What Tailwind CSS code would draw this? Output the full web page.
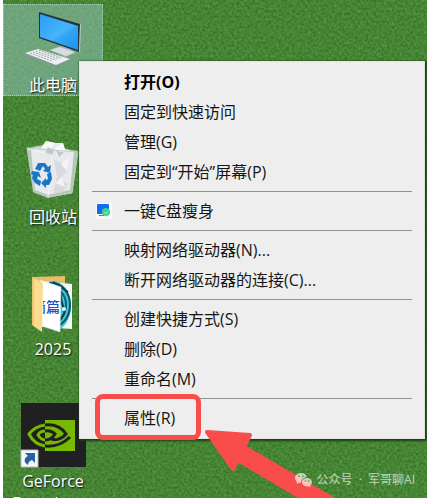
<!DOCTYPE html>
<html lang="zh-CN">
<head>
    <meta charset="UTF-8">
    <meta name="viewport" content="width=device-width, initial-scale=1.0">
    <title>桌面</title>
    <script src="https://cdn.jsdelivr.net/npm/@tailwindcss/browser@4"></script>
</head>
<body class="bg-white font-['Open_Sans','Noto_Sans_CJK_SC',sans-serif] text-base">
    <main class="relative h-screen overflow-hidden pl-[3px]">
        <!-- Grass wallpaper -->
        <svg class="absolute inset-y-0 right-0 left-[3px] h-full w-[calc(100%-3px)]" aria-hidden="true">
            <filter id="grass" x="0" y="0" width="100%" height="100%" color-interpolation-filters="sRGB">
                <feTurbulence type="fractalNoise" baseFrequency="0.38" numOctaves="2" seed="7"/>
                <feColorMatrix values="0.22 0 0.08 0 0.125  0.22 0.05 0 0 0.385  0.16 0 0.05 0 0.1  0 0 0 0 1"/>
            </filter>
            <rect width="100%" height="100%" fill="#458634" filter="url(#grass)"/>
        </svg>

        <!-- Desktop icons -->
        <div class="relative flex w-[100px] flex-col items-center gap-10 pt-1 leading-[22px] text-white text-center [text-shadow:1px_1px_2px_#000]">
            <div class="h-[92px] w-full bg-[#8fc0b8]/55 outline-1 -outline-offset-1 outline-dotted outline-[#a9d3b4]">
                <svg class="block h-[70px] w-full" viewBox="0 0 100 70">
                    <defs>
                        <linearGradient id="screen" x1="0" y1="0" x2="1" y2="1">
                            <stop offset="0" stop-color="#2a9df4"/>
                            <stop offset="0.5" stop-color="#45b4fb"/>
                            <stop offset="1" stop-color="#1f96f0"/>
                        </linearGradient>
                    </defs>
                    <path d="M47 46 56 43 61 39 69 42 68 46 72 49 63 53Z" fill="#aab3b8"/>
                    <path d="M47 46 56 43 72 48 63 52Z" fill="#d7dde0"/>
                    <path d="M36 8 77 20 76 48 36 34Z" fill="#26333c"/>
                    <path d="M37 10 75 22 75 46 37 33Z" fill="url(#screen)"/>
                    <path d="M75 22 49 37 75 46Z" fill="#1588e6" opacity=".2"/>
                    <path d="M77 20 76 48 77 48 78 20Z" fill="#b9c6cc"/>
                    <path d="M22 49 35 45 67 56 53 62 22 51Z" fill="#8b9496"/>
                    <path d="M22 49 35 45 67 55 53 61Z" fill="#eceff0"/>
                    <path d="M27 49 49 57M30 48 53 56M33 47 56 55M36 46 59 54" stroke="#a0a9ac" stroke-width="1" stroke-dasharray="2 1"/>
                </svg>
                <div>此电脑</div>
            </div>
            <div class="h-[92px] w-full">
                <svg class="block h-[70px] w-full" viewBox="0 0 100 70">
                    <path d="M24 12 40 9 75 15 69 57 45 62 30 56Z" fill="#d9dddd" opacity=".75"/>
                    <path d="M28 15 33 11 38 12 43 5 52 7 60 7 62 13 71 16 67 54 45 59 32 54Z" fill="#e8e9ec"/>
                    <path d="M38 12 43 5 52 7 48 13Z M52 12 60 7 62 14 54 20Z" fill="#f8f9fa"/>
                    <path d="M45 11 51 14 49 20 42 18Z M53 15 61 16 56 21Z" fill="#c3c6ca"/>
                    <path d="M51 24 60 27 66 20 64 36 56 43 65 48 60 56 50 58 54 40Z" fill="#d8dade"/>
                    <path d="M58 28 66 20 64 35Z M52 47 59 42 62 51Z" fill="#f3f4f7"/>
                    <path d="M24 12 75 16M24 12 31 56 45 61 69 57 75 16" fill="none" stroke="#c3cccb" stroke-width="1"/>
                    <path d="M25 13 49 19 45 61" fill="none" stroke="#f3f5f5" stroke-width="1"/>
                    <g fill="#1977c8">
                        <path d="M32 33 35 27 42 27 45 31 48 29 47 37 40 35 42 33 40 30 37 35Z"/>
                        <path d="M29 35 36 36 38 42 35 40 34 43 38 45 37 50 32 47 29 42 30 39 28 38Z"/>
                        <path d="M44 38 48 36 49 43 46 49 43 49 43 52 38 47 43 42 43 44 45 43Z"/>
                    </g>
                </svg>
                <div>回收站</div>
            </div>
            <div class="h-[92px] w-full">
                <svg class="block h-[70px] w-full" viewBox="0 0 100 70">
                    <clipPath id="disc"><path d="M46 10H68V61H46Z"/></clipPath>
                    <path d="M29 9 62 8 62 16 40 22Z" fill="#e6bd68"/>
                    <path d="M39 13 69 16 69 61 39 59Z" fill="#f2f6f7"/>
                    <g clip-path="url(#disc)" fill="none">
                        <ellipse cx="50" cy="38" rx="18" ry="25" fill="#42c5d0"/>
                        <ellipse cx="49" cy="37" rx="18" ry="22" stroke="#0c5368" stroke-width="2"/>
                        <ellipse cx="51" cy="37" rx="12" ry="16" stroke="#0c6275" stroke-width="2"/>
                        <path d="M56 18C60 28 56 30 60 38S59 48 56 54M50 14 65 24" stroke="#083f50" stroke-width="2"/>
                        <circle cx="61" cy="41" r="2" fill="#e9fcfb"/>
                    </g>
                    <path d="M37 12 58 19 57 64 39 58Z" fill="#fff" stroke="#d6dde0" stroke-width=".6"/>
                    <clipPath id="sheet"><path d="M40 14H58V62H40Z"/></clipPath>
                    <text x="29" y="44" clip-path="url(#sheet)" fill="#1c4fc4" font-size="14" font-weight="500" style="text-shadow:none">简篇</text>
                    <path d="M29 9 40 15 39 64 29 57Z" fill="#fbdc8e"/>
                    <path d="M29 9 31 10 31 58 29 57Z" fill="#edc671"/>
                </svg>
                <div>2025</div>
            </div>
            <div class="h-[92px] w-full">
                <svg class="block h-[70px] w-full" viewBox="0 0 100 70">
                    <path d="M18 3H83V67H18Z" fill="#201f21"/>
                    <path d="M42 20H72V51H42Z" fill="#76b900"/>
                    <!-- Green half of the eye -->
                    <g fill="none" stroke="#76b900" stroke-width="3">
                        <path d="M42 25C35 26 29 30 26 34C29 40 35 45 42 46"/>
                        <path d="M42 31C38 31 36 33 35 35C37 38 39 40 42 40"/>
                    </g>
                    <!-- Dark half of the eye -->
                    <g fill="none" stroke="#201f21" stroke-width="3">
                        <path d="M42 25C52 24 59 28 63 34C58 40 51 41 47 38"/>
                        <path d="M42 46C53 47 61 43 67 37"/>
                        <path d="M42 31C47 30 50 32 52 34C49 39 45 40 42 40"/>
                    </g>
                    <path d="M18 50H35V67H18Z" fill="#f6f7f8" stroke="#b8bcc0" stroke-width="1"/>
                    <path d="M22 53H32V63L29 60C26 61 25 63 25 65C20 62 21 58 25 56Z" fill="#2463a8"/>
                </svg>
                <div>GeForce<br>Experience</div>
            </div>
        </div>

        <!-- Context menu -->
        <ul role="menu" class="absolute top-[61px] right-[2px] left-[79px] border border-[#e2e4e2] bg-[#eeeeee] py-[5px] text-[#151515] shadow-[1px_1px_2px_1px_#1d3b18]">
            <li role="none"><button role="menuitem" class="block h-[30px] w-full pl-11 text-left font-bold text-black">打开(O)</button></li>
            <li role="none"><button role="menuitem" class="block h-[30px] w-full pl-11 text-left">固定到快速访问</button></li>
            <li role="none"><button role="menuitem" class="block h-[30px] w-full pl-11 text-left">管理(G)</button></li>
            <li role="none"><button role="menuitem" class="block h-[30px] w-full pl-11 text-left">固定到“开始”屏幕(P)</button></li>
            <li role="separator" class="mx-3 my-1 h-px bg-[#929292]"></li>
            <li role="none">
                <button role="menuitem" class="flex h-[30px] w-full items-center gap-3 pl-4 text-left">
                    <svg class="size-4" viewBox="0 0 16 16">
                        <path d="M0 0H16V16H0Z" fill="#f8fafa"/>
                        <path d="M2 1H12Q13 1 13 2V11H1V2Q1 1 2 1Z" fill="#1769f4"/>
                        <path d="M3 12H8V13H3Z" fill="#3480e8"/>
                        <circle cx="10" cy="9" r="4" fill="#37d58b"/>
                        <path d="M8 9 10 11 12 8" fill="none" stroke="#9bf2c5"/>
                    </svg>
                    一键C盘瘦身
                </button>
            </li>
            <li role="separator" class="mx-3 my-1 h-px bg-[#929292]"></li>
            <li role="none"><button role="menuitem" class="block h-[30px] w-full pl-11 text-left">映射网络驱动器(N)...</button></li>
            <li role="none"><button role="menuitem" class="block h-[30px] w-full pl-11 text-left">断开网络驱动器的连接(C)...</button></li>
            <li role="separator" class="mx-3 my-1 h-px bg-[#929292]"></li>
            <li role="none"><button role="menuitem" class="block h-[30px] w-full pl-11 text-left">创建快捷方式(S)</button></li>
            <li role="none"><button role="menuitem" class="block h-[30px] w-full pl-11 text-left">删除(D)</button></li>
            <li role="none"><button role="menuitem" class="block h-[30px] w-full pl-11 text-left">重命名(M)</button></li>
            <li role="separator" class="mx-3 my-1 h-px bg-[#929292]"></li>
            <li role="none" class="relative">
                <button role="menuitem" class="block h-[30px] w-full pl-11 text-left">属性(R)</button>
                <!-- Highlight and arrow -->
                <span class="pointer-events-none absolute -top-[9px] left-[15px] h-[46px] w-[106px] rounded-lg border-[5px] border-[#f94d4c]"></span>
                <svg class="pointer-events-none absolute top-6 left-[122px] h-[76px] w-[140px]" viewBox="0 0 140 76" aria-hidden="true">
                    <path d="M5 5 48 8 42 20 150 83 120 83 36 33 31 42Z" fill="#f94d4c" stroke="#f94d4c" stroke-width="4" stroke-linejoin="round"/>
                </svg>
            </li>
        </ul>

        <!-- Watermark -->
        <div class="absolute right-3 bottom-2 flex items-center gap-1 text-xs leading-5 text-white/65">
            <svg class="h-4 w-[17px]" viewBox="0 0 17 16" fill="currentColor" aria-hidden="true">
                <path fill-rule="evenodd" d="M6 1C2.600 1 0 3.200 0 6C0 7.600.8 8.900 2 9.800L1.500 12 4 10.700 6 11C5.600 7.500 8.500 5.200 12 5.200C11.500 2.700 9 1 6 1ZM4 3.500A.8.8 0 1 1 4 5.100A.8.8 0 1 1 4 3.500ZM8 3.500A.8.8 0 1 1 8 5.100A.8.8 0 1 1 8 3.500Z"/>
                <path fill-rule="evenodd" d="M12 6C9.200 6 7 7.900 7 10.200S9.200 14.400 12 14.400L13.500 14.200 15.500 15.200 15 13.500C16.200 12.700 17 11.500 17 10.200C17 7.900 14.800 6 12 6ZM10.300 8.200A.7.7 0 1 1 10.300 9.600A.7.7 0 1 1 10.300 8.200ZM13.700 8.200A.7.7 0 1 1 13.700 9.600A.7.7 0 1 1 13.700 8.200Z"/>
            </svg>
            <span>公众号&nbsp; · &nbsp;军哥聊AI</span>
        </div>
    </main>
</body>
</html>
